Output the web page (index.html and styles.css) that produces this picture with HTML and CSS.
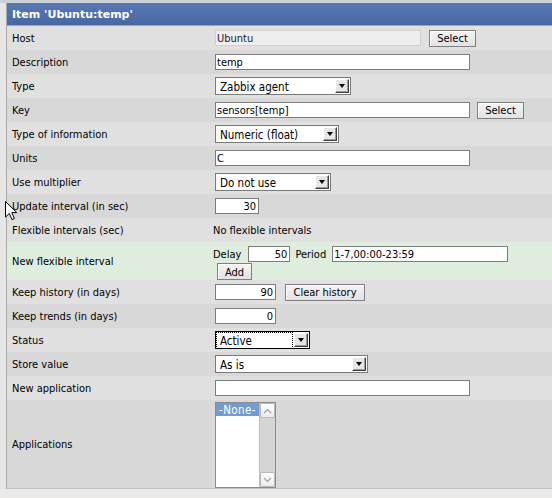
FILE: index.html
```html
<!DOCTYPE html>
<html lang="en">
<head>
    <meta charset="UTF-8">
    <title>Item 'Ubuntu:temp'</title>
    <link rel="stylesheet" href="styles.css">
</head>
<body>
    <div class="frame">
        <div class="form-header">Item 'Ubuntu:temp'</div>
        <table class="form-table">
            <tr class="light">
                <td class="label">Host</td>
                <td class="value"><div class="field">
                    <input type="text" class="text disabled" style="width:206px" value="Ubuntu" readonly>
                    <button class="btn btn-host">Select</button>
                </div></td>
            </tr>
            <tr class="dark">
                <td class="label">Description</td>
                <td class="value"><div class="field">
                    <input type="text" class="text wide" value="temp">
                </div></td>
            </tr>
            <tr class="light">
                <td class="label">Type</td>
                <td class="value"><div class="field">
                    <div class="select" style="width:136px"><span class="select-text">Zabbix agent</span><span class="arrow"></span></div>
                </div></td>
            </tr>
            <tr class="dark">
                <td class="label">Key</td>
                <td class="value"><div class="field">
                    <input type="text" class="text wide" value="sensors[temp]">
                    <button class="btn btn-key">Select</button>
                </div></td>
            </tr>
            <tr class="light">
                <td class="label">Type of information</td>
                <td class="value"><div class="field">
                    <div class="select" style="width:124px"><span class="select-text">Numeric (float)</span><span class="arrow"></span></div>
                </div></td>
            </tr>
            <tr class="dark">
                <td class="label">Units</td>
                <td class="value"><div class="field">
                    <input type="text" class="text wide" value="C">
                </div></td>
            </tr>
            <tr class="light">
                <td class="label">Use multiplier</td>
                <td class="value"><div class="field">
                    <div class="select" style="width:116px"><span class="select-text">Do not use</span><span class="arrow"></span></div>
                </div></td>
            </tr>
            <tr class="dark">
                <td class="label">Update interval (in sec)</td>
                <td class="value"><div class="field">
                    <input type="text" class="text num" style="width:44px" value="30">
                </div></td>
            </tr>
            <tr class="light">
                <td class="label">Flexible intervals (sec)</td>
                <td class="value plain">No flexible intervals</td>
            </tr>
            <tr class="green">
                <td class="label">New flexible interval</td>
                <td class="value">
                    <div class="field flex-line">
                        <span>Delay</span>
                        <input type="text" class="text num delay" value="50">
                        <span class="period-label">Period</span>
                        <input type="text" class="text period" value="1-7,00:00-23:59">
                    </div>
                    <div class="field"><button class="btn btn-add">Add</button></div>
                </td>
            </tr>
            <tr class="light">
                <td class="label">Keep history (in days)</td>
                <td class="value"><div class="field">
                    <input type="text" class="text num" style="width:61px" value="90">
                    <button class="btn btn-clear">Clear history</button>
                </div></td>
            </tr>
            <tr class="dark">
                <td class="label">Keep trends (in days)</td>
                <td class="value"><div class="field">
                    <input type="text" class="text num" style="width:61px" value="0">
                </div></td>
            </tr>
            <tr class="light">
                <td class="label">Status</td>
                <td class="value"><div class="field">
                    <div class="select focused" style="width:95px"><span class="select-text">Active</span><span class="arrow"></span></div>
                </div></td>
            </tr>
            <tr class="dark">
                <td class="label">Store value</td>
                <td class="value"><div class="field">
                    <div class="select" style="width:153px"><span class="select-text">As is</span><span class="arrow"></span></div>
                </div></td>
            </tr>
            <tr class="light">
                <td class="label">New application</td>
                <td class="value"><div class="field">
                    <input type="text" class="text wide" value="">
                </div></td>
            </tr>
            <tr class="dark apps">
                <td class="label">Applications</td>
                <td class="value top">
                    <div class="listbox">
                        <div class="options">
                            <div class="option selected">-None-</div>
                        </div>
                        <div class="scrollbar">
                            <span class="scroll-btn"><svg width="9" height="6" viewBox="0 0 9 6"><path d="M1 5 L4.5 1.5 L8 5" fill="none" stroke="#a0a0a0" stroke-width="1.2"/></svg></span>
                            <span class="scroll-btn"><svg width="9" height="6" viewBox="0 0 9 6"><path d="M1 1 L4.5 4.5 L8 1" fill="none" stroke="#a0a0a0" stroke-width="1.2"/></svg></span>
                        </div>
                    </div>
                </td>
            </tr>
        </table>
    </div>

    <!-- mouse pointer in the shot -->
    <svg class="cursor" width="13" height="20" viewBox="0 0 13 20">
        <path d="M0.5 0.5 L0.5 16 L4.3 12.4 L7 18.6 L9.4 17.6 L6.8 11.6 L11.8 11.6 Z" fill="#fff" stroke="#000" stroke-width="1"/>
    </svg>
</body>
</html>
```

FILE: styles.css
```css
body {
    margin: 0;
    background-color: #ebeae8;
    font-family: "DejaVu Sans Condensed", "DejaVu Sans", sans-serif;
    font-size: 11px;
    color: #000;
    border-top: 3px solid #cdd1d8;
}
.frame {
    margin-left: 6px;
    border-left: 1px solid #a9a9a9;
    border-bottom: 1px solid #c2c2c2;
    box-shadow: -6px 0 0 #e6e6e6;
}
.form-header {
    box-sizing: border-box;
    height: 23px;
    padding: 2px 0 0 5px;
    line-height: 20px;
    background: linear-gradient(#5a79b3, #4767a3);
    border-bottom: 1px solid #93a6c6;
    color: #fff;
    font-family: "DejaVu Sans", sans-serif;
    font-weight: bold;
    font-size: 11px;
}
.form-table {
    width: 100%;
    border-collapse: collapse;
}
.form-table td {
    height: 24px;
    padding: 0;
    vertical-align: middle;
}
.light { background-color: #e0e0e0; }
.dark { background-color: #d8d8d8; }
.green { background-color: #dfeddf; }
.green td { height: 38px; }
.apps td { height: 88px; }
.form-table td.label {
    width: 201px;
    height: 23px;
    padding: 1px 0 0 5px;
}
.green td.label { height: 37px; }
.apps td.label { height: 87px; }
td.top { vertical-align: top; }
.field {
    display: flex;
    align-items: center;
}

/* text inputs */
input.text {
    box-sizing: border-box;
    height: 16px;
    margin: 0 0 0 2px;
    padding: 1px 1px 0;
    border: 1px solid #7c7c7c;
    background: #fff;
    font-family: inherit;
    font-size: 11px;
    color: #000;
    outline: none;
}
input.wide { width: 255px; }
input.num { text-align: right; padding-right: 2px; }
input.disabled {
    background-color: #eeeeee;
    border-color: #d0d0d0;
    color: #222;
}

/* buttons */
.btn {
    box-sizing: border-box;
    height: 17px;
    padding: 1px 6px 0;
    border: 1px solid #7f7f7f;
    background: linear-gradient(#f4f4f4, #e2e2e2);
    box-shadow: inset 1px 1px 0 #fff;
    font-family: inherit;
    font-size: 11px;
    color: #000;
}
.btn-host { width: 47px; margin-left: 8px; }
.btn-key { width: 47px; margin-left: 7px; }
.btn-clear { width: 80px; margin-left: 9px; }
.btn-add { width: 35px; margin-left: 4px; }

/* drop-down lists */
.select {
    box-sizing: border-box;
    height: 18px;
    margin-left: 2px;
    border: 1px solid #7a7a7a;
    background: #fff;
    display: flex;
    align-items: center;
}
.select-text {
    flex: 1;
    padding: 1px 0 0 4px;
    font-size: 11.5px;
    line-height: 14px;
}
.arrow {
    box-sizing: border-box;
    width: 14px;
    height: 14px;
    margin-right: 1px;
    background: #e6e6e6;
    border-top: 1px solid #fff;
    border-left: 1px solid #fff;
    border-right: 1px solid #404040;
    border-bottom: 1px solid #404040;
    box-shadow: inset -1px -1px 0 #9a9a9a;
    display: flex;
    align-items: center;
    justify-content: center;
}
.arrow::after {
    content: "";
    border-left: 3px solid transparent;
    border-right: 3px solid transparent;
    border-top: 4px solid #000;
    margin-left: -1px;
}
.select.focused { border-color: #000; }
.select.focused .select-text {
    margin-left: 1px;
    padding-left: 3px;
    outline: 1px dotted #000;
    margin-right: 2px;
}

/* new flexible interval */
.flex-line { height: 18px; margin-top: 3px; }
.flex-line span { padding-top: 1px; }
.delay { width: 42px; margin-left: 7px !important; }
.period-label { margin-left: 5px; }
.period { width: 176px; margin-left: 6px !important; }
.form-table td.plain { height: 23px; padding-top: 1px; }

/* applications list */
.listbox {
    box-sizing: border-box;
    width: 61px;
    height: 86px;
    margin: 2px 0 0 2px;
    border: 1px solid #8a8a8a;
    background: #fff;
    display: flex;
}
.options { flex: 1; }
.option {
    height: 13px;
    line-height: 14px;
    padding-left: 3px;
    font-size: 11.5px;
    letter-spacing: 0.4px;
}
.option.selected {
    background-color: #729cd0;
    color: #fff;
}
.scrollbar {
    width: 15px;
    background: #d5d5d5;
    border-left: 1px solid #bdbdbd;
    display: flex;
    flex-direction: column;
    justify-content: space-between;
}
.scroll-btn {
    box-sizing: border-box;
    height: 15px;
    background: linear-gradient(#fdfdfd, #ececec);
    border: 1px solid #b9b9b9;
    border-radius: 2px;
    display: flex;
    align-items: center;
    justify-content: center;
}

.cursor {
    position: absolute;
    left: 5px;
    top: 201px;
}
```
